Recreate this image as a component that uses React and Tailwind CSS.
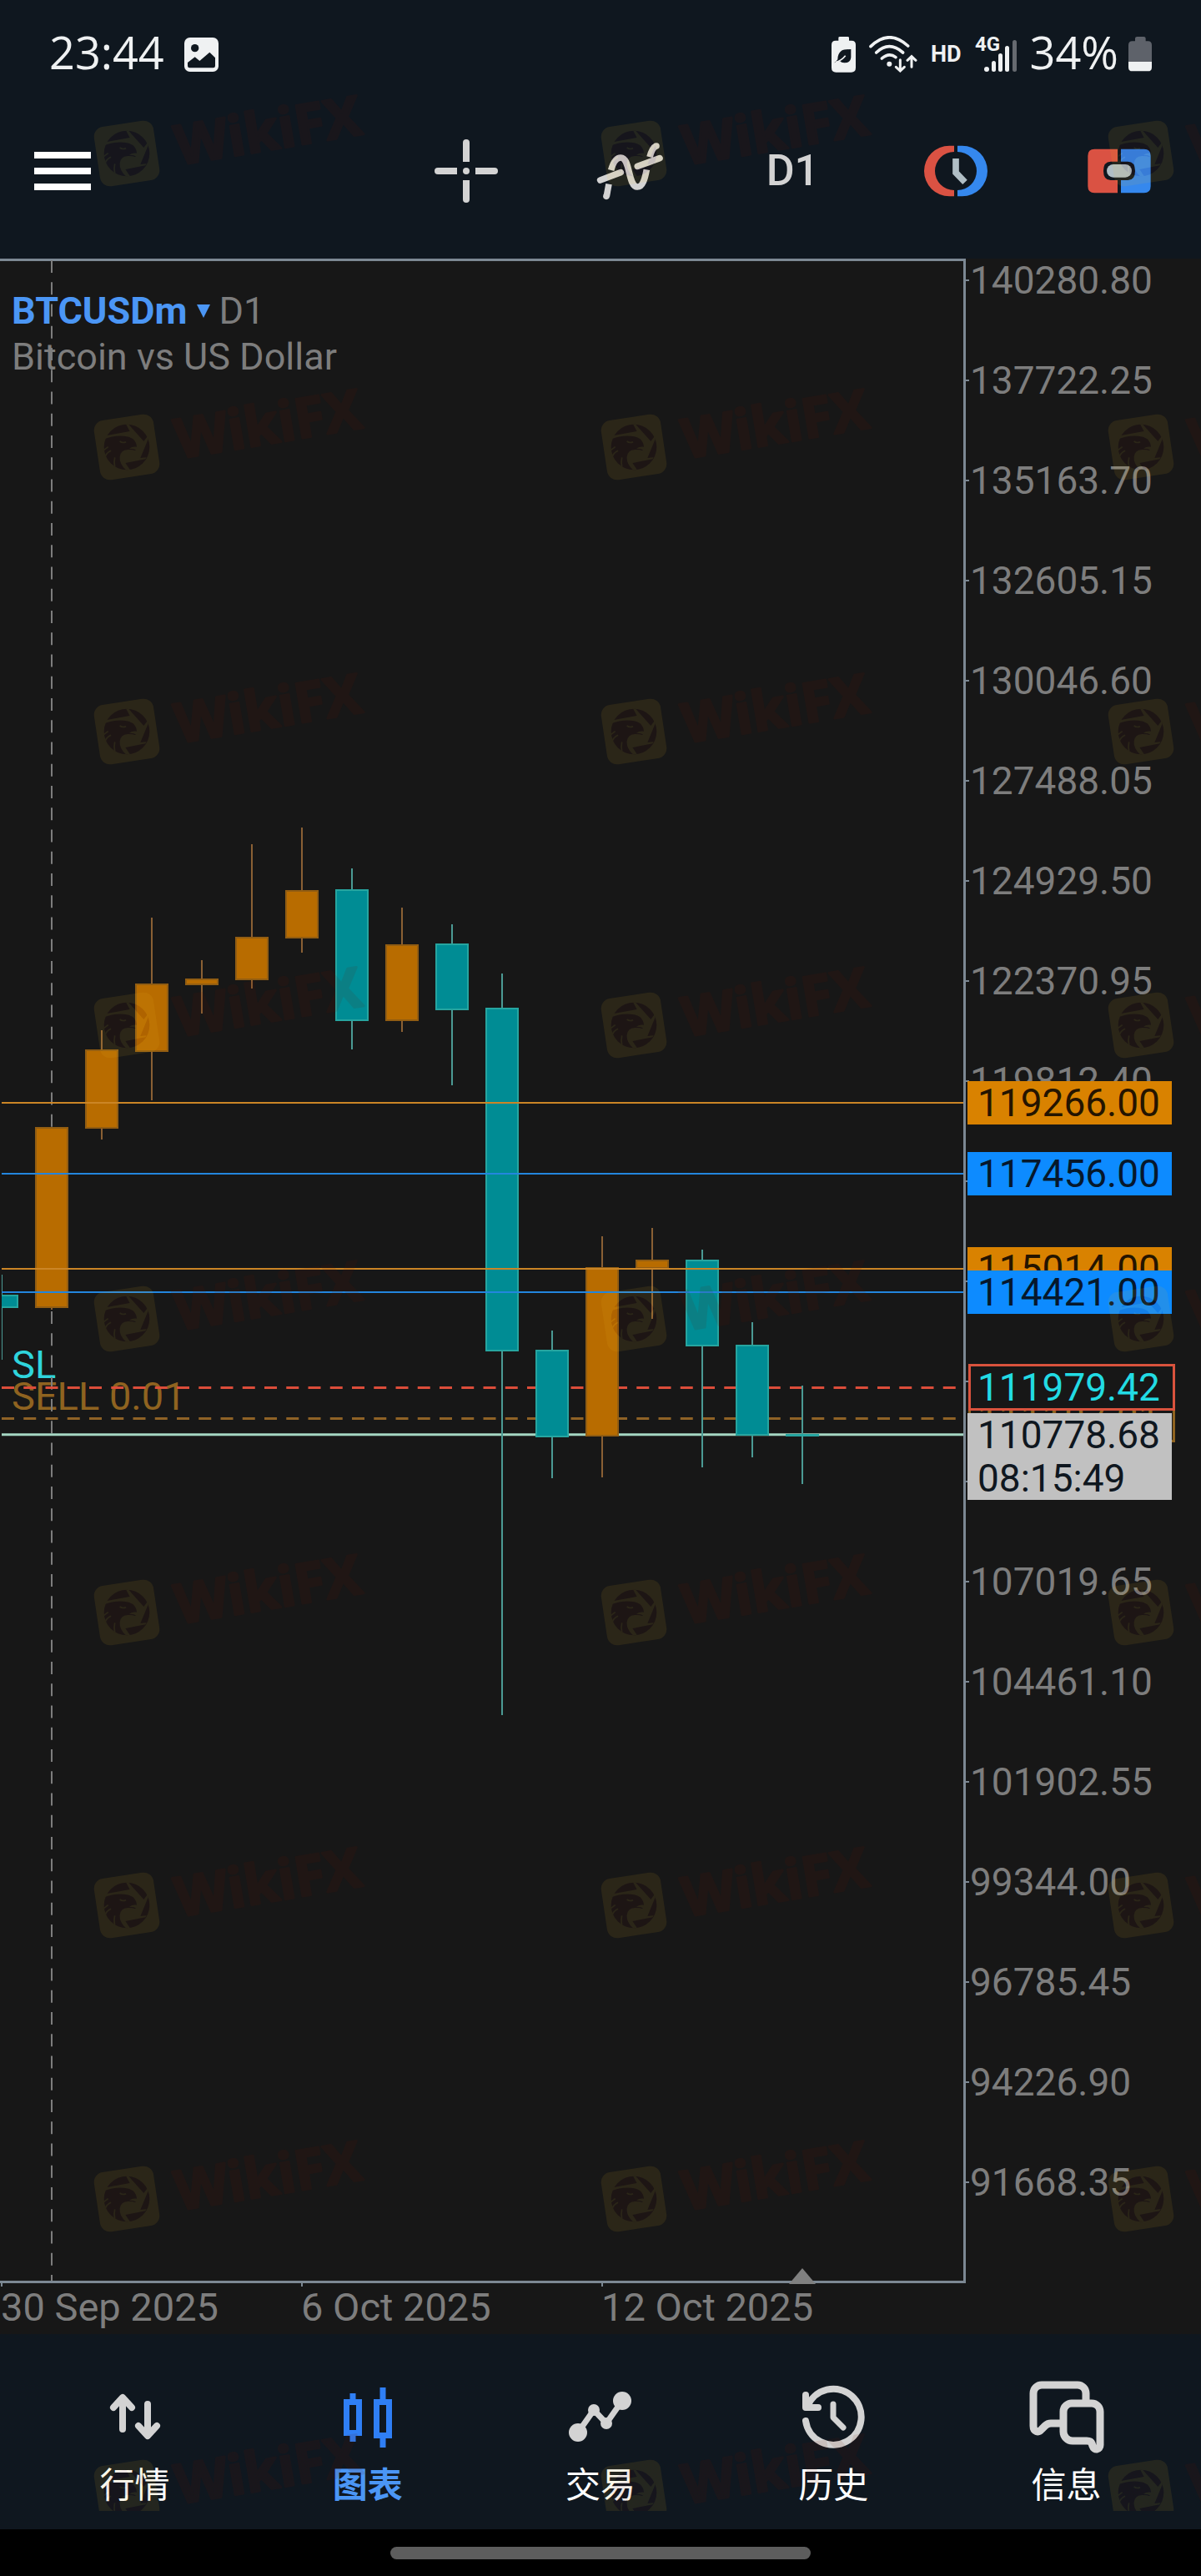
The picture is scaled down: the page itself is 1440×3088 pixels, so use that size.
import { useState } from "react";

const PRICE_MAX = 140280.8;
const PRICE_STEP = 2558.55;
const STEP_PX = 120;
const LABEL_HALF = 26;
const FRAME = 3;

// distance from the top of the axis column to a price
const priceY = (price) => LABEL_HALF + ((PRICE_MAX - price) / PRICE_STEP) * STEP_PX;

const scale = Array.from({ length: 20 }, (_, i) => (PRICE_MAX - i * PRICE_STEP).toFixed(2));

const dates = ["30 Sep 2025", "6 Oct 2025", "12 Oct 2025"];

const levels = [
  { price: 119266, color: "#cb8526", tag: "bg-[#d98200] text-[#241400]" },
  { price: 117456, color: "#2386de", tag: "bg-[#0d8bff] text-[#06182c]" },
  { price: 115014, color: "#cb8526", tag: "bg-[#d98200] text-[#241400]" },
  { price: 114421, color: "#2386de", tag: "bg-[#0d8bff] text-[#06182c]" },
];

const SL_PRICE = 111979.42;
const SELL_PRICE = 111187.21;
const LAST_PRICE = 110778.68;

const UP = { fill: "#b86c00", edge: "#925d12", wick: "#8a6034" };
const DOWN = { fill: "#008c94", edge: "#26a5a0", wick: "#4b9a94" };

// x, high, body top, body bottom, low
const candles = [
  [62, 1038, 1038, 1255, 1257, UP],
  [122, 922, 945, 1040, 1053, UP],
  [182, 787, 866, 948, 1006, UP],
  [242, 838, 860, 868, 902, UP],
  [302, 699, 810, 862, 872, UP],
  [362, 679, 754, 812, 829, UP],
  [422, 728, 753, 911, 945, DOWN],
  [482, 775, 819, 911, 924, UP],
  [542, 795, 818, 898, 988, DOWN],
  [602, 854, 895, 1307, 1743, DOWN],
  [662, 1282, 1305, 1410, 1459, DOWN],
  [722, 1169, 1206, 1409, 1458, UP],
  [782, 1159, 1197, 1208, 1268, UP],
  [842, 1185, 1197, 1301, 1446, DOWN],
  [902, 1272, 1299, 1408, 1434, DOWN],
  [962, 1348, 1406, 1409, 1466, DOWN],
];

function StatusBar() {
  const textClass = "pb-[6px] font-['Open_Sans',sans-serif] text-[54px] leading-none";
  return (
    <div className="flex h-[130px] items-center justify-between px-[59px] text-[#eff1f2]">
      <div className="flex items-center gap-6">
        <span className={textClass}>23:44</span>
        <svg width="41" height="41" viewBox="0 0 123 123" aria-hidden="true">
          <rect width="123" height="123" rx="20" fill="currentColor" />
          <circle cx="38" cy="38" r="14" fill="#0f171f" />
          <path d="M12 90 L38 70 L55 84 L91 53 L111 73 V102 Q111 109 104 109 H19 Q12 109 12 102 Z" fill="#0f171f" />
        </svg>
      </div>
      <div className="flex items-center gap-4">
        <svg width="29" height="43" viewBox="0 0 87 129" aria-hidden="true">
          <path d="M25 4 Q25 0 30 0 H58 Q63 0 63 4 V14 H72 Q87 14 87 29 V112 Q87 128 71 128 H16 Q0 128 0 112 V29 Q0 14 15 14 H25 Z" fill="currentColor" />
          <path d="M70 45 V74 Q68 94 48 94 Q36 95 30 87 L10 94 Q18 88 22 82 Q22 60 36 50 Q44 46 70 45 Z" fill="#0f171f" />
          <path d="M14 92 Q36 86 50 68" fill="none" stroke="currentColor" strokeWidth="5" />
        </svg>
        <svg width="58" height="44" viewBox="0 0 174 132" fill="none" stroke="currentColor" strokeWidth="11" strokeLinecap="round" aria-hidden="true">
          <path d="M6 38 Q72 -26 140 36" />
          <path d="M26 60 Q72 16 122 60" />
          <path d="M46 81 Q72 58 96 77" />
          <circle cx="73" cy="101" r="9" fill="currentColor" stroke="none" />
          <path d="M112 86 V124 M97 112 L112 126 L127 112" strokeWidth="9" />
          <path d="M153 112 V76 M138 88 L153 74 L168 88" strokeWidth="9" />
        </svg>
        <span className="font-['Roboto',sans-serif] text-[27px] leading-none font-bold">HD</span>
        <svg width="50" height="44" viewBox="0 0 50 44" fill="currentColor" aria-label="4G">
          <text x="0" y="18" fontFamily="Roboto, sans-serif" fontSize="24" fontWeight="700">4G</text>
          <circle cx="14" cy="40" r="3" />
          <rect x="20" y="30" width="5" height="13" rx="2.5" />
          <rect x="28" y="21" width="5" height="22" rx="2.5" />
          <rect x="36" y="12" width="5" height="31" rx="2.5" />
          <rect x="45" y="5" width="5" height="38" rx="2.5" fill="#666a70" />
        </svg>
        <div className="flex items-center gap-3">
          <span className={textClass}>34%</span>
          <svg width="28" height="42" viewBox="0 0 84 126" aria-hidden="true">
            <path d="M24 6 Q24 0 31 0 H55 Q62 0 62 6 V16 H70 Q84 16 84 30 V90 H0 V30 Q0 16 14 16 H24 Z" fill="#5e626a" />
            <path d="M0 90 H84 V110 Q84 124 70 124 H14 Q0 124 0 110 Z" fill="currentColor" />
          </svg>
        </div>
      </div>
    </div>
  );
}

function CrosshairIcon() {
  return (
    <svg width="76" height="76" viewBox="-38 -38 76 76" fill="#d3d3d3" aria-hidden="true">
      {[0, 90, 180, 270].map((angle) => (
        <path key={angle} d="M-4 -11 V-34 Q-4 -38 0 -38 Q4 -38 4 -34 V-11 Z" transform={`rotate(${angle})`} />
      ))}
      <circle r="4" />
    </svg>
  );
}

function IndicatorIcon() {
  return (
    <svg width="84" height="70" viewBox="699 150 252 210" fill="none" stroke="#d3d3d3" strokeWidth="23" aria-hidden="true">
      <path d="M719 288 L793 260 M853 238 L933 209" strokeLinecap="round" />
      <path d="M758 252 C766 222 778 207 793 207 C828 207 818 312 853 312 C872 312 880 282 886 250" />
      <path d="M750 302 L742 345" />
      <circle cx="741" cy="346" r="11.5" fill="#d3d3d3" stroke="none" />
      <path d="M897 205 C903 182 909 170 920 165" />
      <circle cx="921" cy="165" r="11.5" fill="#d3d3d3" stroke="none" />
    </svg>
  );
}

function PendingIcon() {
  return (
    <svg width="80" height="66" viewBox="441 516 240 198" aria-hidden="true">
      <path d="M555 524 H538 A91 91 0 0 0 538 706 H555 V684 A69 69 0 0 1 555 546 Z" fill="#da5243" />
      <path d="M567 524 H584 A91 91 0 0 1 584 706 H567 V684 A69 69 0 0 0 567 546 Z" fill="#3588ee" />
      <path d="M561 570 V621 L594 655" fill="none" stroke="#b0bec5" strokeWidth="23" />
    </svg>
  );
}

function NewOrderIcon() {
  return (
    <svg width="76" height="54" viewBox="1032 534 228 162" aria-hidden="true">
      <path d="M1140 536 H1057 Q1033 536 1033 560 V670 Q1033 694 1057 694 H1140 V648 H1115 Q1089 648 1089 615 Q1089 581 1115 581 H1140 Z" fill="#da5243" />
      <path d="M1152 536 H1235 Q1259 536 1259 560 V670 Q1259 694 1235 694 H1152 V648 H1177 Q1203 648 1203 615 Q1203 581 1177 581 H1152 Z" fill="#3588ee" />
      <rect x="1101" y="591" width="90" height="47" rx="23.5" fill="#b0bec5" />
    </svg>
  );
}

function Toolbar() {
  const toolClass = "flex flex-1 items-center justify-center";
  return (
    <div className="flex h-[150px] items-center">
      <div className="w-[32%]">
        <button type="button" aria-label="菜单" className="ml-[41px] flex flex-col gap-[11px]">
          <span className="h-2 w-[68px] bg-white" />
          <span className="h-2 w-[68px] bg-white" />
          <span className="h-2 w-[68px] bg-white" />
        </button>
      </div>
      <button type="button" aria-label="十字线" className={toolClass}>
        <CrosshairIcon />
      </button>
      <button type="button" aria-label="指标" className={toolClass}>
        <IndicatorIcon />
      </button>
      <button type="button" className={`${toolClass} text-[52px] leading-none font-medium text-[#d3d3d3]`}>
        D1
      </button>
      <button type="button" aria-label="挂单" className={toolClass}>
        <PendingIcon />
      </button>
      <button type="button" aria-label="新订单" className={toolClass}>
        <NewOrderIcon />
      </button>
    </div>
  );
}

function Plot() {
  const slY = priceY(SL_PRICE) - FRAME;
  const sellY = priceY(SELL_PRICE) - FRAME;
  const lastY = priceY(LAST_PRICE) - FRAME;
  const orderClass = "absolute left-[14px] text-[47px] leading-[52px]";

  return (
    <div className="relative flex-1 border-y-[3px] border-r-[3px] border-[#7c8893]">
      <div className="px-[14px] pt-8 text-[45px] leading-[55px]">
        <h1 className="flex items-center">
          <button type="button" className="flex items-center gap-3 font-bold text-[#4b96f5]">
            BTCUSDm
            <svg width="16" height="16" viewBox="0 0 16 16" fill="currentColor" aria-hidden="true">
              <path d="M0 0 H16 L8 16 Z" />
            </svg>
          </button>
          <span className="ml-[10px]">D1</span>
        </h1>
        <p>Bitcoin vs US Dollar</p>
      </div>
      <span className={`${orderClass} text-[#2fd4dc]`} style={{ top: slY - 53 }}>
        SL
      </span>
      <span className={`${orderClass} text-[#8f6320]`} style={{ top: sellY - 53 }}>
        SELL 0.01
      </span>
      <svg className="pointer-events-none absolute inset-0 h-full w-full overflow-visible" aria-hidden="true">
        <line x1="62" x2="62" y1="-1" y2="100%" stroke="#7d7d7d" strokeWidth="2" strokeDasharray="15 11.25" />
        <line x1="2" x2="100%" y1={slY} y2={slY} stroke="#dc4d3a" strokeWidth="3" strokeDasharray="15 11.25" />
        <line x1="2" x2="100%" y1={sellY} y2={sellY} stroke="#8f6226" strokeWidth="3" strokeDasharray="15 11.25" />
        <line x1="2" x2="100%" y1={lastY} y2={lastY} stroke="#a5d6c3" strokeWidth="3" />
        <rect x="2" y="1215" width="1" height="102" fill={DOWN.wick} />
        <rect x="2" y="1239" width="20" height="16" fill={DOWN.edge} />
        <rect x="2" y="1241" width="18" height="12" fill={DOWN.fill} />
        {candles.map(([x, high, top, bottom, low, tone]) => (
          <g key={x}>
            <rect x={x - 1} y={high} width="2" height={low - high} fill={tone.wick} />
            <rect x={x - 20} y={top} width="40" height={bottom - top} fill={tone.edge} />
            <rect x={x - 18} y={top + 2} width="36" height={Math.max(bottom - top - 4, 0)} fill={tone.fill} />
          </g>
        ))}
        {levels.map(({ price, color }) => (
          <line
            key={price}
            x1="2"
            x2="100%"
            y1={Math.round(priceY(price)) - FRAME}
            y2={Math.round(priceY(price)) - FRAME}
            stroke={color}
            strokeWidth="2"
          />
        ))}
        <path d="M962 2406 L978 2425 H946 Z" fill="#808080" />
      </svg>
    </div>
  );
}

function PriceAxis() {
  const tagClass = "absolute left-[2px] w-[245px] pl-3 leading-[52px]";
  const boxClass = "absolute left-[3px] w-[248px] border-[3px] bg-[#171717] pl-2 leading-[50px]";
  return (
    <div className="relative w-[282px] shrink-0 pb-[27px]">
      {scale.map((label) => (
        <div key={label} className="flex h-[120px] items-start gap-px leading-[52px]">
          <span className="mt-[25px] h-[2px] w-1 bg-[#7c8893]" />
          {label}
        </div>
      ))}
      {levels.map(({ price, tag }) => (
        <div key={price} className={`${tagClass} ${tag}`} style={{ top: Math.round(priceY(price)) - LABEL_HALF }}>
          {price.toFixed(2)}
        </div>
      ))}
      <div className={`${boxClass} border-[#8f6320] text-[#8f6320]`} style={{ top: Math.round(priceY(SELL_PRICE)) - 28 }}>
        {SELL_PRICE}
      </div>
      <div className={`${boxClass} border-[#d9523d] text-[#22dbe4]`} style={{ top: Math.round(priceY(SL_PRICE)) - 28 }}>
        {SL_PRICE}
      </div>
      <div className={`${tagClass} bg-[#c1c1c1] text-[#0f171f]`} style={{ top: Math.round(priceY(LAST_PRICE)) - LABEL_HALF }}>
        {LAST_PRICE}
        <br />
        08:15:49
      </div>
    </div>
  );
}

function DateAxis() {
  return (
    <div className="flex h-[61px] text-[47px]">
      {dates.map((date) => (
        <div key={date} className="w-[360px] pl-px">
          <span className="block h-1 w-[2px] bg-[#7c8893]" />
          <span className="block leading-[50px]">{date}</span>
        </div>
      ))}
    </div>
  );
}

const tabs = [
  {
    label: "行情",
    icon: (
      <g fill="none" stroke="currentColor" strokeWidth="8" strokeLinecap="round" strokeLinejoin="round">
        <path d="M-15 15 V-22 M-26 -11 L-15 -23 L-4 -11" />
        <path d="M15 -15 V22 M4 11 L15 23 L26 11" />
      </g>
    ),
  },
  {
    label: "图表",
    icon: (
      <g fill="none" stroke="currentColor" strokeWidth="7">
        <path d="M-25.5 -17.5 H-10.5 V19.5 H-25.5 Z M-18 -28 V-17 M-18 19 V30" />
        <path d="M10.5 -17.5 H25.5 V22.5 H10.5 Z M18 -35 V-17 M18 22 V37" />
      </g>
    ),
  },
  {
    label: "交易",
    icon: (
      <g fill="currentColor">
        <path d="M-27 19 L-8 -8 L7 8 L26 -19" fill="none" stroke="currentColor" strokeWidth="7" />
        <circle cx="-27" cy="19" r="11" />
        <circle cx="-8" cy="-8" r="7" />
        <circle cx="7" cy="8" r="7" />
        <circle cx="26" cy="-19" r="11" />
      </g>
    ),
  },
  {
    label: "历史",
    icon: (
      <g fill="none" stroke="currentColor" strokeWidth="8" strokeLinecap="round" strokeLinejoin="round">
        <path d="M-33 5 A33.5 33.5 0 1 0 -31 -12" />
        <path d="M-33 -26 V-11 H-18" />
        <path d="M0 -15 V1 L12 13" strokeWidth="7" />
      </g>
    ),
  },
  {
    label: "信息",
    icon: (
      <g fill="none" stroke="currentColor" strokeWidth="9" strokeLinejoin="round">
        <path d="M24 -20 V-28 a10 10 0 0 0 -10 -10 H-29 a10 10 0 0 0 -10 10 V11 c0 7 6 9 10 4 l4 -4 q3 -3 7 -3 H-4" />
        <path d="M8 -16 H31 a10 10 0 0 1 10 10 V34 c0 6 -7 7 -9 1 l-1 -3 q-1 -3 -6 -3 H8 a11 11 0 0 1 -11 -11 V-6 a10 10 0 0 1 11 -10 Z" />
      </g>
    ),
  },
];

function TabBar({ active, onChange }) {
  return (
    <nav className="flex bg-[#0f171f] px-[22px] pt-[55px] pb-[31px]">
      {tabs.map(({ label, icon }) => {
        const selected = label === active;
        return (
          <button
            key={label}
            type="button"
            aria-current={selected ? "page" : undefined}
            onClick={() => onChange(label)}
            className="flex flex-1 flex-col items-center gap-[10px]"
          >
            <svg
              width="92"
              height="88"
              viewBox="-46 -44 92 88"
              className={selected ? "text-[#2f7ff5]" : "text-[#d3d3d3]"}
              aria-hidden="true"
            >
              {icon}
            </svg>
            <span
              className={`font-['Noto_Sans_CJK_SC',sans-serif] text-[42px] leading-[50px] ${
                selected ? "font-bold text-[#4b96f5]" : "text-white"
              }`}
            >
              {label}
            </span>
          </button>
        );
      })}
    </nav>
  );
}

const markRows = [184, 536, 877, 1229, 1581, 1933, 2284, 2636, 2988];
const markCols = [152, 760, 1368];

function Mark() {
  return (
    <>
      <g opacity="0.09">
        <rect x="-36" y="-36" width="72" height="72" rx="12" fill="#f5be22" transform="rotate(-8.5)" />
        <g transform="scale(0.3333) translate(-241 -229)">
          <circle cx="241" cy="229" r="82" fill="#5a0c00" />
          <path
            d="M160 194 L170 187 L252 172 L238 146 L248 148 L302 208 L316 190 L318 200 L290 268 L312 266 L308 272 L236 286 L252 310 L238 311 Q214 288 216 264 Q218 240 245 238 L262 239 Q270 242 274 240 Q270 234 250 234 Q262 226 277 228 Q276 212 264 200 Q250 190 232 189 Q192 186 160 200 Z"
            fill="#f5be22"
          />
          <path d="M216 208 Q226 216 238 210" fill="none" stroke="#f5be22" strokeWidth="5" />
          <path d="M158 240 L174 228 M164 262 Q168 250 184 242 M198 300 Q194 282 198 266" fill="none" stroke="#f5be22" strokeWidth="5" />
        </g>
      </g>
      <text
        transform="translate(62 14) rotate(-9.5)"
        opacity="0.1"
        fill="#6e1600"
        stroke="#6e1600"
        strokeWidth="3"
        strokeLinejoin="round"
        fontFamily="'Open Sans', sans-serif"
        fontWeight="700"
        fontSize="66"
      >
        WikiFX
      </text>
    </>
  );
}

function Watermark() {
  return (
    <div className="pointer-events-none absolute inset-x-0 top-0 bottom-[78px] overflow-hidden" aria-hidden="true">
      <svg className="h-full w-full">
        {markRows.map((y) =>
          markCols.map((x) => (
            <g key={`${x}-${y}`} transform={`translate(${x} ${y})`}>
              <Mark />
            </g>
          ))
        )}
      </svg>
    </div>
  );
}

export default function App() {
  const [tab, setTab] = useState("图表");

  return (
    <div className="relative flex min-h-screen flex-col bg-black font-['Roboto',sans-serif]">
      <header className="bg-[#0f171f] pb-[30px]">
        <StatusBar />
        <Toolbar />
      </header>
      <main className="bg-[#171717] text-[46px] text-[#7d7d7d]">
        <div className="flex">
          <Plot />
          <PriceAxis />
        </div>
        <DateAxis />
      </main>
      <TabBar active={tab} onChange={setTab} />
      <div className="flex flex-1 justify-center pt-[21px] pb-5">
        <span className="h-[15px] w-[35%] rounded-full bg-[#5d5d5d]" />
      </div>
      <Watermark />
    </div>
  );
}
